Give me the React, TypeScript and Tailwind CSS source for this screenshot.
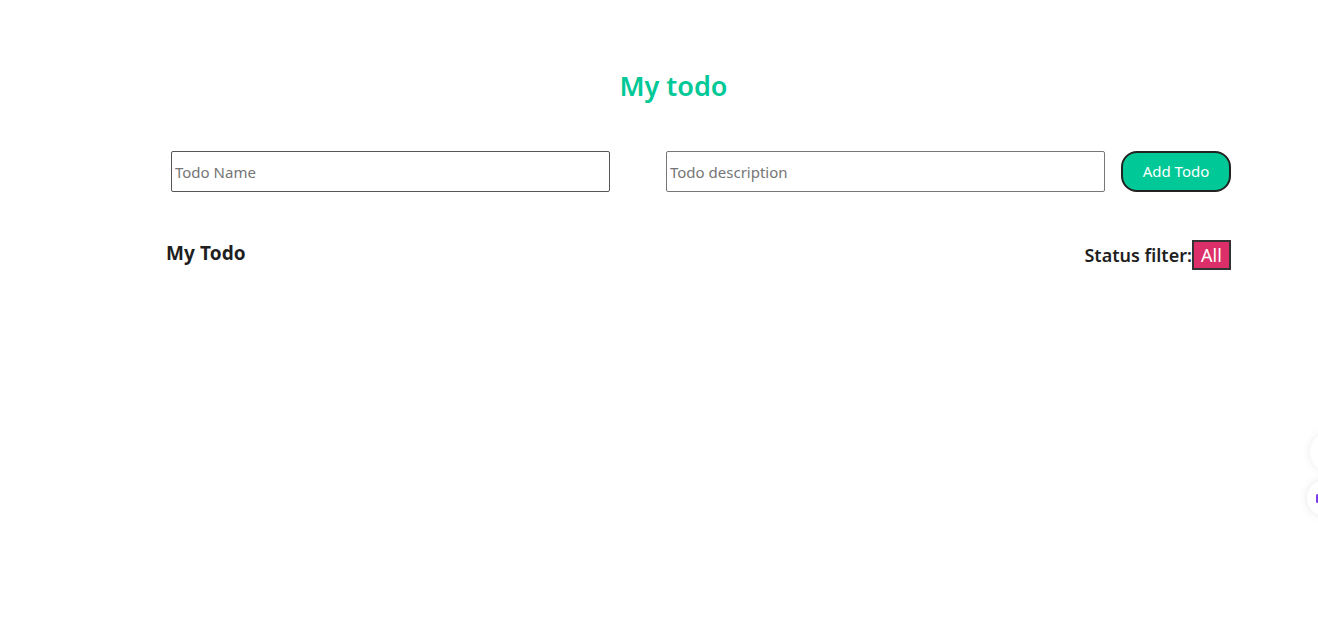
export default function App() {
  return (
    <div className="relative min-h-[632px] w-full overflow-hidden bg-white font-['Noto_Sans',sans-serif] text-[#1f1f1f]">
      <h1 className="pt-[66px] pl-[29px] text-center text-[27px] font-semibold leading-[40px] text-[#00c896]">
        My todo
      </h1>

      <div className="ml-[166px] w-[1065px]">
        {/* inputs */}
        <div className="mt-[45px] flex items-center pl-[5px]">
          <input
            placeholder="Todo Name"
            className="h-[41px] w-[439px] rounded-[2px] border border-[#555] px-[3px] text-[15px] text-[#333] placeholder:text-[#757575] outline-none"
          />
          <input
            placeholder="Todo description"
            className="ml-[56px] h-[41px] w-[439px] rounded-[2px] border border-[#777] px-[3px] text-[15px] text-[#333] placeholder:text-[#757575] outline-none"
          />
          <button className="ml-[16px] h-[41px] w-[110px] rounded-[16px] border-2 border-[#222] bg-[#00c896] text-[15px] text-white">
            Add Todo
          </button>
        </div>

        {/* list header */}
        <div className="mt-[48px] flex items-start justify-between">
          <h2 className="mt-[-1px] text-[19px] font-bold leading-[28px] tracking-[0.1px]">My Todo</h2>
          <div className="flex items-center">
            <span className="mt-[1px] text-[18px] font-semibold">Status filter:</span>
            <div className="flex h-[30px] w-[39px] items-center justify-center border-2 border-[#333] bg-[#dc2f69] text-[18px] text-white">
              All
            </div>
          </div>
        </div>
      </div>

      {/* floating widget at the right edge */}
      <div className="absolute left-[1310px] top-[432px] h-[40px] w-[40px] rounded-full bg-white shadow-[0_0_10px_rgba(0,0,0,0.08)]" />
      <div className="absolute left-[1307px] top-[480px] flex h-[36px] w-[36px] items-center rounded-full bg-white pl-[9px] shadow-[0_0_10px_rgba(0,0,0,0.1)]">
        <div className="h-[9px] w-[3px] rounded-sm bg-[#7c3aed]" />
      </div>
    </div>
  );
}
